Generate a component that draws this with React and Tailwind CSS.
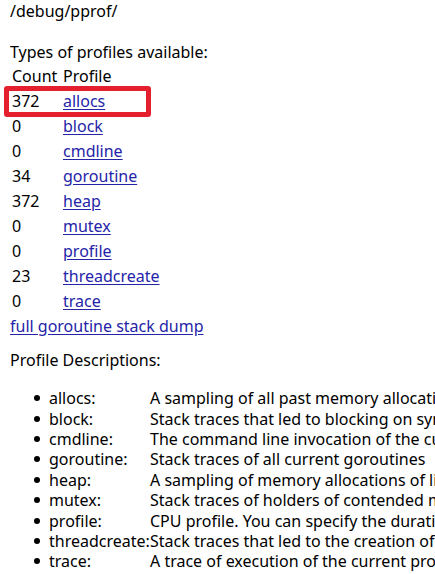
const profiles = [
  { count: '372', name: 'allocs' },
  { count: '0', name: 'block' },
  { count: '0', name: 'cmdline' },
  { count: '34', name: 'goroutine' },
  { count: '372', name: 'heap' },
  { count: '0', name: 'mutex' },
  { count: '0', name: 'profile' },
  { count: '23', name: 'threadcreate' },
  { count: '0', name: 'trace' },
];

const descriptions = [
  { name: 'allocs:', text: 'A sampling of all past memory allocations' },
  { name: 'block:', text: 'Stack traces that led to blocking on synchronization primitives' },
  { name: 'cmdline:', text: 'The command line invocation of the current program' },
  { name: 'goroutine:', text: 'Stack traces of all current goroutines' },
  { name: 'heap:', text: 'A sampling of memory allocations of live objects.' },
  { name: 'mutex:', text: 'Stack traces of holders of contended mutexes' },
  { name: 'profile:', text: 'CPU profile. You can specify the duration in the seconds GET parameter.' },
  { name: 'threadcreate:', text: 'Stack traces that led to the creation of new OS threads' },
  { name: 'trace:', text: 'A trace of execution of the current program.' },
];

const App = () => {
  return (
    <div className="relative w-[435px] h-[574px] overflow-hidden bg-white text-black text-[16px] font-['Noto_Sans','Open_Sans',sans-serif]">
      {/* Page header */}
      <div className="pl-[10px] pt-[1px] leading-[21px] whitespace-nowrap">/debug/pprof/</div>

      <div className="pl-[10px] mt-[20px] leading-[21px] whitespace-nowrap">Types of profiles available:</div>

      {/* Profile table */}
      <div className="pl-[12px]">
        <div className="flex h-[25px] items-center whitespace-nowrap">
          <span className="w-[51px] shrink-0">Count</span>
          <span>Profile</span>
        </div>
        {profiles.map((p) => (
          <div key={p.name} className="flex h-[25px] items-center whitespace-nowrap">
            <span className="w-[51px] shrink-0">{p.count}</span>
            <a href="#" className="text-[#2424a8] underline underline-offset-2">{p.name}</a>
          </div>
        ))}
      </div>

      <div className="pl-[10px] h-[25px] flex items-center whitespace-nowrap">
        <a href="#" className="text-[#2424a8] underline underline-offset-2">full goroutine stack dump</a>
      </div>

      <div className="pl-[10px] mt-[12px] leading-[21px] whitespace-nowrap">Profile Descriptions:</div>

      {/* Descriptions list */}
      <ul className="mt-[17px] whitespace-nowrap">
        {descriptions.map((d) => (
          <li key={d.name} className="flex items-center h-[20.4px]">
            <span className="w-[49px] shrink-0 flex justify-end pr-[9px]">
              <span className="w-[6px] h-[6px] rounded-full bg-black" />
            </span>
            <span className="w-[101px] shrink-0">{d.name}</span>
            <span className="shrink-0">{d.text}</span>
          </li>
        ))}
      </ul>

      {/* Red highlight box */}
      <div className="absolute left-[4px] top-[86px] w-[147px] h-[31px] border-[5px] border-[#e5202e] rounded-[3px]" />
    </div>
  );
};

export default App;
